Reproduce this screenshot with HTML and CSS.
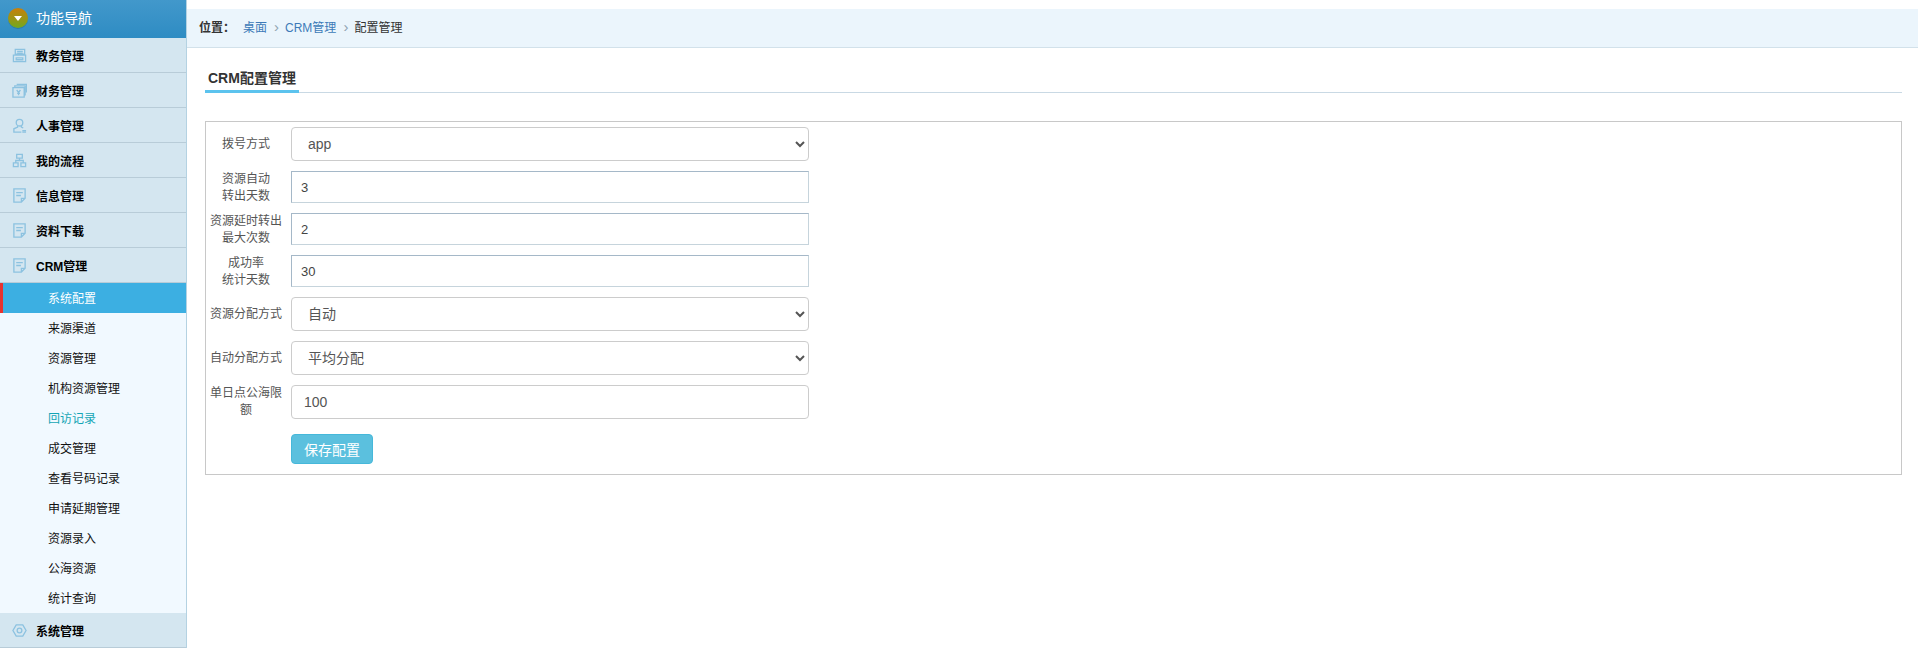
FILE: index.html
```html
<!DOCTYPE html>
<html lang="zh-CN">
<head>
<meta charset="utf-8">
<title>CRM配置管理</title>
<link rel="stylesheet" href="styles.css">
</head>
<body>
<div class="page">
  <aside class="sidebar">
    <div class="side-head">
      <span class="badge"><span class="tri"></span></span>
      <span class="head-text">功能导航</span>
    </div>
    <div class="menu-item"><svg class="ico" viewBox="0 0 16 16"><path d="M3.500 1.500h10v5h-10zM1.500 7.500h13v7h-13zM4.500 10.500h7v2h-7zM5.500 3.500h6M5.500 5.500h6"/></svg><span>教务管理</span></div>
    <div class="menu-item"><svg class="ico" viewBox="0 0 16 16"><path d="M1 5h12v10H1zM3 5V3h11v9.500h-1M5 1.500h10.500V10M5 7.500l2 2.500 2-2.500M7 10v3M5.500 11h3"/></svg><span>财务管理</span></div>
    <div class="menu-item"><svg class="ico" viewBox="0 0 16 16"><circle cx="8" cy="5" r="3.500"/><path d="M6 8.500v1.200L2 11.500V15h8M10 8.500v1.200l2 1M11 13.500h4M11 15h4"/></svg><span>人事管理</span></div>
    <div class="menu-item"><svg class="ico" viewBox="0 0 16 16"><path d="M5 1.500h6v4H5zM1.500 10.500h5v4h-5zM9.500 10.500h5v4h-5zM8 5.500V8M4 10.500V8h8v2.500"/></svg><span>我的流程</span></div>
    <div class="menu-item"><svg class="ico" viewBox="0 0 16 16"><path d="M2 1h12v10l-4 4H2zM10 15v-4h4M4.500 5h7M4.500 8h5"/></svg><span>信息管理</span></div>
    <div class="menu-item"><svg class="ico" viewBox="0 0 16 16"><path d="M2 1h12v10l-4 4H2zM10 15v-4h4M4.500 5h7M4.500 8h5"/></svg><span>资料下载</span></div>
    <div class="menu-item"><svg class="ico" viewBox="0 0 16 16"><path d="M2 1h12v10l-4 4H2zM10 15v-4h4M4.500 5h7M4.500 8h5"/></svg><span>CRM管理</span></div>
    <ul class="submenu">
      <li class="sub active">系统配置</li>
      <li class="sub">来源渠道</li>
      <li class="sub">资源管理</li>
      <li class="sub">机构资源管理</li>
      <li class="sub visited">回访记录</li>
      <li class="sub">成交管理</li>
      <li class="sub">查看号码记录</li>
      <li class="sub">申请延期管理</li>
      <li class="sub">资源录入</li>
      <li class="sub">公海资源</li>
      <li class="sub">统计查询</li>
    </ul>
    <div class="menu-item"><svg class="ico" viewBox="0 0 16 16"><path d="M4.500 2h7L15 8l-3.500 6h-7L1 8z"/><circle cx="8" cy="8" r="2.500"/></svg><span>系统管理</span></div>
  </aside>
  <main class="main">
    <div class="crumbs">
      <b class="crumb-label">位置：</b>
      <a class="crumb-link">桌面</a>
      <span class="crumb-sep">›</span>
      <a class="crumb-link">CRM管理</a>
      <span class="crumb-sep">›</span>
      <span>配置管理</span>
    </div>
    <div class="content">
      <div class="tabs"><span class="tab">CRM配置管理</span></div>
      <form class="panel">
        <div class="row row-select">
          <label class="lbl">拨号方式</label>
          <select class="ctl"><option>app</option></select>
        </div>
        <div class="row row-plain">
          <label class="lbl">资源自动<br>转出天数</label>
          <input class="plain" value="3">
        </div>
        <div class="row row-plain">
          <label class="lbl">资源延时转出<br>最大次数</label>
          <input class="plain" value="2">
        </div>
        <div class="row row-plain">
          <label class="lbl">成功率<br>统计天数</label>
          <input class="plain" value="30">
        </div>
        <div class="row row-select">
          <label class="lbl">资源分配方式</label>
          <select class="ctl"><option>自动</option></select>
        </div>
        <div class="row row-select">
          <label class="lbl">自动分配方式</label>
          <select class="ctl"><option>平均分配</option></select>
        </div>
        <div class="row row-select">
          <label class="lbl">单日点公海限<br>额</label>
          <input class="ctl" value="100">
        </div>
        <div class="row row-btn">
          <span class="lbl"></span>
          <button type="button" class="save">保存配置</button>
        </div>
      </form>
    </div>
  </main>
</div>
</body>
</html>
```
FILE: styles.css
```css
* { box-sizing: border-box; }
html, body { margin: 0; padding: 0; height: 100%; background: #fff; overflow: hidden; }
body { font-family: "Liberation Sans", "Noto Sans CJK SC", sans-serif; font-size: 12px; color: #333; }
.page { display: flex; align-items: flex-start; height: 650px; }

.sidebar { width: 187px; flex: none; border-right: 1px solid #b4d2e2; background: #f1f9ff; height: 648px; }
.side-head { height: 38px; display: flex; align-items: center; padding: 0 0 2px 8px; gap: 8px; color: #fff; font-size: 14px; background: linear-gradient(#4298cb, #2e8cc3); }
.head-text { margin-top: -2px; }
.badge { width: 20px; height: 20px; border-radius: 50%; background: linear-gradient(#c97f0a, #72a91f); display: flex; align-items: center; justify-content: center; box-shadow: 0 1px 0 #2b79a8; }
.tri { width: 0; height: 0; border-left: 4px solid transparent; border-right: 4px solid transparent; border-top: 5px solid #fff; }
.menu-item { height: 35px; display: flex; align-items: center; background: #d4e6f0; border-bottom: 1px solid #b8ccd8; color: #000; font-weight: 700; padding-left: 12px; gap: 9px; }
.ico { width: 15px; height: 15px; fill: none; stroke: #8cc2e0; stroke-width: 1.4; flex: none; }
.submenu { list-style: none; margin: 0; padding: 0; }
.sub { height: 30px; line-height: 32px; padding-left: 48px; color: #111; background: #f1f9ff; }
.sub.active { background: #3cafe2; color: #fff; border-left: 3px solid #e8332f; padding-left: 45px; }
.sub.visited { color: #14a5b5; }

.main { flex: 1; min-width: 0; padding-top: 9px; }
.crumbs { height: 39px; background: #ebf5fc; border-bottom: 1px solid #d2e1ea; display: flex; align-items: center; padding: 0 0 3px 12px; color: #333; }
.crumb-label { margin-right: 8px; }
.crumb-link { color: #3d7ab8; }
.crumb-sep { color: #8fa3b1; margin: 0 6px 0 7px; font-size: 15px; line-height: 1; }
.content { padding: 0 16px 0 18px; }
.tabs { margin-top: 19px; height: 26px; border-bottom: 1px solid #c9d9e4; display: flex; }
.tab { display: block; height: 26px; line-height: 22px; padding: 0 3px; font-size: 14px; font-weight: 700; color: #333; border-bottom: 3px solid #5cc3ee; }

.panel { margin-top: 28px; height: 354px; border: 1px solid #c8c8c8; padding-top: 5px; }
.row { display: flex; align-items: center; gap: 9px; padding-left: 4px; }
.row-select { height: 34px; margin-bottom: 10px; }
.row-plain { height: 32px; margin-bottom: 10px; }
.row-plain .lbl { padding-top: 1px; }
.row-btn { height: 30px; margin-top: 15px; }
.lbl { width: 72px; flex: none; text-align: center; line-height: 17px; color: #555; font-size: 12px; }
.ctl, .plain { width: 518px; font-family: inherit; color: #555; }
.ctl { height: 34px; border: 1px solid #ccc; border-radius: 4px; background-color: #fff; font-size: 14px; padding: 0 12px; outline: 0; }
.plain { height: 32px; border: 1px solid; border-color: #a5b8c8 #c6d4dc #c6d4dc #a5b8c8; font-size: 13px; padding: 0 9px; color: #444; background: #fff; outline: 0; }
.save { width: 82px; height: 30px; border: 1px solid #46b8da; border-radius: 4px; background: #5bc0de; color: #fff; font-family: inherit; font-size: 14px; padding: 0; }
```
